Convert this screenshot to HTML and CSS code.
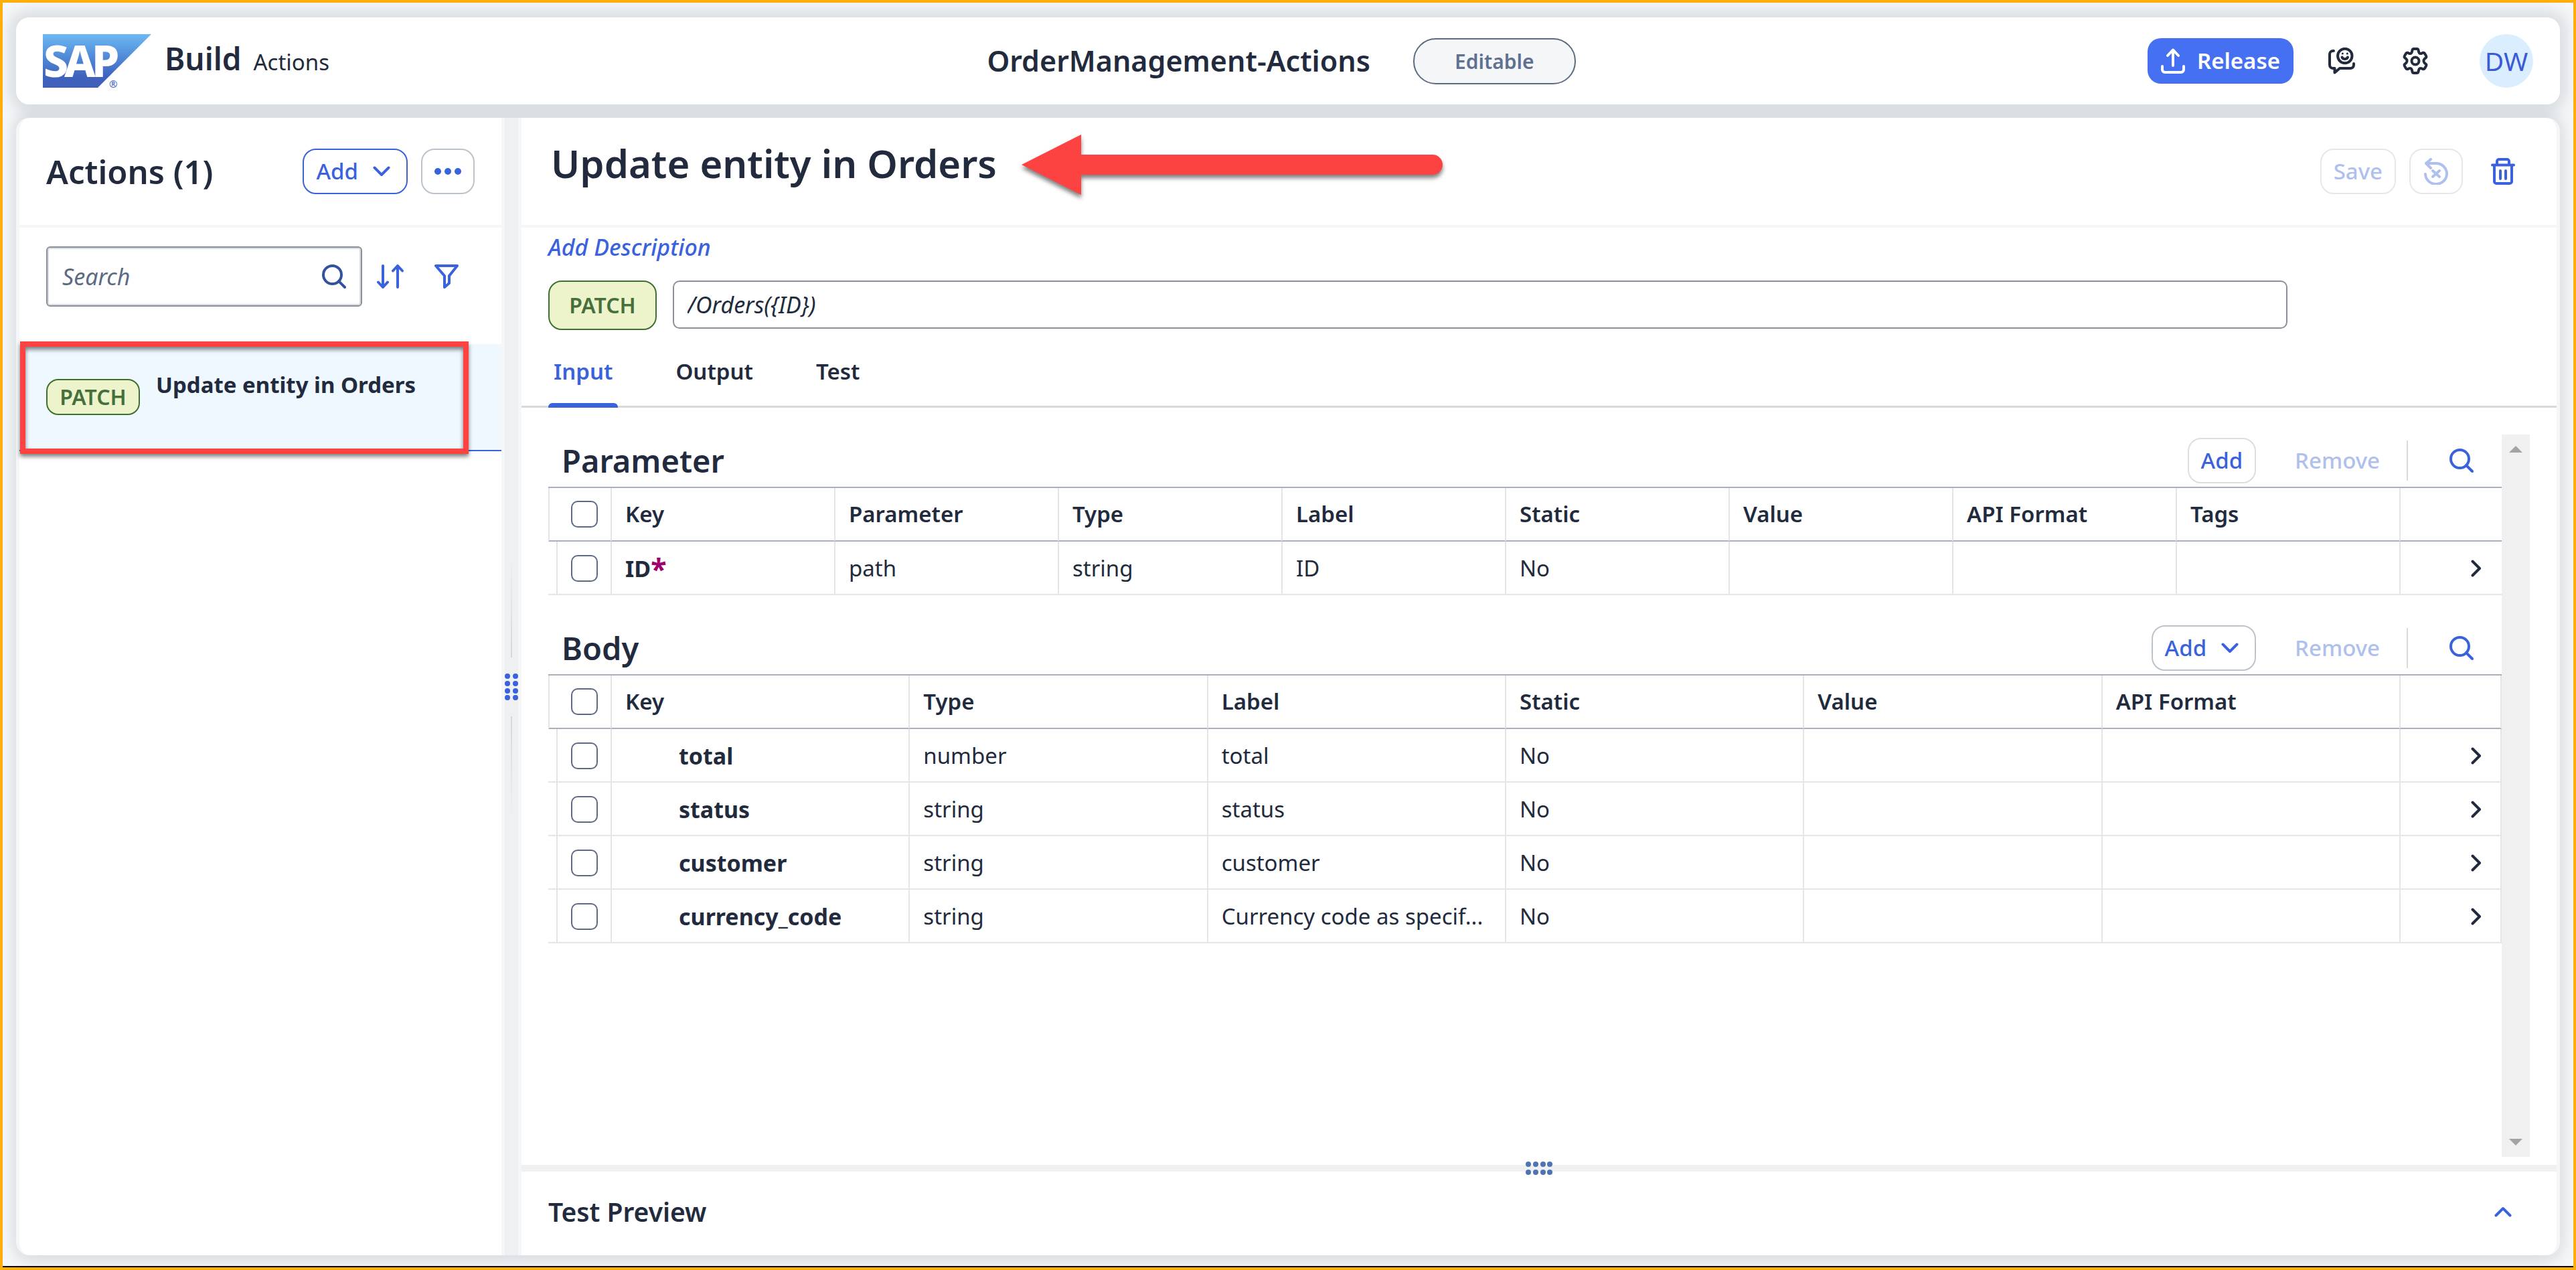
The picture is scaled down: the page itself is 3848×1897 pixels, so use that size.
FILE: index.html
```html
<!DOCTYPE html>
<html lang="en">
<head>
<meta charset="utf-8">
<meta name="viewport" content="width=device-width, initial-scale=1">
<title>SAP Build Actions</title>
<link rel="stylesheet" href="styles.css">
</head>
<body>
<svg class="sprite" width="0" height="0" aria-hidden="true">
  <symbol id="search" viewBox="0 0 36 36"><circle cx="15.5" cy="15.5" r="13.5"/><path d="M25 25l9 9"/></symbol>
  <symbol id="down" viewBox="0 0 26 16"><path d="M2.500 2.500L13 13L23.500 2.500"/></symbol>
  <symbol id="up" viewBox="0 0 26 16"><path d="M2.500 13.500L13 3L23.500 13.500"/></symbol>
  <symbol id="right" viewBox="0 0 16 26"><path d="M2.500 2.500L13 13L2.500 23.500"/></symbol>
</svg>
<div class="shell">
  <header class="card topbar">
    <div class="brand">
      <svg class="logo" width="162" height="80" viewBox="0 0 162 80" role="img" aria-label="SAP">
        <defs><linearGradient id="sap" x1="0" y1="0" x2="0" y2="1"><stop offset="0" stop-color="#6cb9f2"/><stop offset=".5" stop-color="#4c82d3"/><stop offset=".8" stop-color="#3f62bd"/><stop offset="1" stop-color="#3f5fbb"/></linearGradient></defs>
        <path d="M0 0H162L82 80H0z" fill="url(#sap)"/>
        <text class="logo-text" y="64" x="1 32 73">SAP</text>
        <text class="logo-mark" x="99" y="80">®</text>
      </svg>
      <div class="names"><span class="product">Build</span><span class="area">Actions</span></div>
    </div>
    <div class="project"><h1>OrderManagement-Actions</h1><span class="pill">Editable</span></div>
    <div class="tools">
      <button class="release" type="button"><svg width="36" height="38" viewBox="0 0 36 38"><path d="M18 26V3M10 11l8-8.500l8 8.500M2 27v5a4 4 0 0 0 4 4h24a4 4 0 0 0 4-4v-5"/></svg>Release</button>
      <button class="icon-btn dark" type="button" aria-label="Feedback"><svg width="40" height="40" viewBox="0 0 40 40"><circle cx="24.800" cy="12.500" r="10.700"/><path d="M8 5H7a5 5 0 0 0-5 5V26a5 5 0 0 0 5 5h2.500V37.500L17 31H33a5 5 0 0 0 5-5v-2"/><path d="M20.500 14.500c1.500 3.500 7 3.500 8.500 0"/><circle class="dot" cx="21.300" cy="9" r="1.500"/><circle class="dot" cx="28.300" cy="9" r="1.500"/></svg></button>
      <button class="icon-btn dark settings" type="button" aria-label="Settings"><svg width="40" height="40" viewBox="0 0 40 40"><circle cx="20" cy="20" r="5.500"/><path d="M17.500 2h5q1.500 0 1.900 1.500l.8 3.200q.5 1.900 2.200 2.300q1 .3 2-.2l1.800-.9q1.700-.7 2.700.9l2.200 3.800q.8 1.500-.4 2.600l-2 1.700q-1.200 1.200-1.200 3.100t1.200 3.100l2 1.700q1.200 1.100.4 2.600l-2.200 3.800q-1 1.600-2.700.9l-1.800-.9q-1-.5-2-.2q-1.700.4-2.200 2.300l-.8 3.200q-.4 1.500-1.900 1.500h-5q-1.500 0-1.900-1.500l-.8-3.200q-.5-1.900-2.200-2.300q-1-.3-2 .2l-1.800.9q-1.700.7-2.700-.9l-2.200-3.800q-.8-1.500.4-2.600l2-1.700q1.200-1.200 1.200-3.100t-1.200-3.100l-2-1.700q-1.200-1.100-.4-2.600l2.200-3.800q1-1.600 2.700-.9l1.800.9q1 .5 2 .2q1.700-.4 2.200-2.300l.8-3.200q.4-1.500 1.900-1.500z"/></svg></button>
      <button class="avatar" type="button" aria-label="Profile DW">DW</button>
    </div>
  </header>

  <main class="card workspace">
    <aside class="sidebar">
      <div class="pane-head">
        <h2>Actions (1)</h2>
        <div class="actions">
          <button class="btn strong" type="button">Add<svg class="chevron" width="26" height="16"><use href="#down"/></svg></button>
          <button class="btn square" type="button" aria-label="More"><svg class="fill" width="40" height="10" viewBox="0 0 40 10"><circle cx="5" cy="5" r="5"/><circle cx="20" cy="5" r="5"/><circle cx="35" cy="5" r="5"/></svg></button>
        </div>
      </div>
      <div class="filter-row">
        <label class="search"><input type="search" placeholder="Search" aria-label="Search"><svg width="36" height="36"><use href="#search"/></svg></label>
        <button class="icon-btn" type="button" aria-label="Sort"><svg width="40" height="36" viewBox="0 0 40 36"><path d="M9 2V33M2 26.500L9 34l7-7.500M31 34V3M24 9.500L31 2l7 7.500"/></svg></button>
        <button class="icon-btn" type="button" aria-label="Filter"><svg width="36" height="36" viewBox="0 0 36 36"><path d="M2 2H34L22 17V28L15 34V17z"/></svg></button>
      </div>
      <ul class="list">
        <li class="item"><span class="tag">PATCH</span><a href="#orders">Update entity in Orders</a><span class="marker"></span></li>
      </ul>
    </aside>

    <div class="splitter">
      <i class="rule top"></i>
      <svg width="20" height="40" viewBox="0 0 20 40"><g fill="#3a62dc"><circle cx="4" cy="4" r="4"/><circle cx="16" cy="4" r="4"/><circle cx="4" cy="15" r="4"/><circle cx="16" cy="15" r="4"/><circle cx="4" cy="26" r="4"/><circle cx="16" cy="26" r="4"/><circle cx="4" cy="36" r="4"/><circle cx="16" cy="36" r="4"/></g></svg>
      <i class="rule bottom"></i>
    </div>

    <section class="detail" id="orders">
      <div class="pane-head detail-head">
        <h2 class="title">Update entity in Orders</h2>
        <svg class="arrow" width="632" height="100" viewBox="0 0 632 100" aria-hidden="true"><path d="M0 45L89 0V30H614a15 15 0 0 1 0 30H89V90z"/></svg>
        <div class="actions">
          <button class="btn" type="button" disabled>Save</button>
          <button class="btn square" type="button" aria-label="Revert" disabled><svg width="36" height="40" viewBox="0 0 36 40"><path d="M2 24a16 15.500 0 1 0 16-16H3M10 2L3 8l7 7M13 19l10 9M23 19l-10 9"/></svg></button>
          <button class="icon-btn delete" type="button" aria-label="Delete"><svg width="36" height="40" viewBox="0 0 36 40"><path d="M2 10.500H34M9 10V5a3 3 0 0 1 3-3H24a3 3 0 0 1 3 3V10M5 11V35a3 3 0 0 0 3 3H28a3 3 0 0 0 3-3V11M14 19V31M22 19V31"/></svg></button>
        </div>
      </div>
      <div class="meta">
        <button class="describe" type="button">Add Description</button>
        <div class="endpoint"><span class="tag large">PATCH</span><input type="text" value="/Orders({ID})" aria-label="Endpoint" readonly></div>
      </div>
      <nav class="tabs">
        <a class="active" href="#input">Input</a><a href="#output">Output</a><a href="#test">Test</a>
      </nav>
      <div class="scroller" id="input">
        <div class="tables">
          <div class="toolbar">
            <h3>Parameter</h3>
            <button class="btn pale" type="button">Add</button>
            <button class="btn plain" type="button" disabled>Remove</button>
            <i class="bar"></i>
            <button class="icon-btn" type="button" aria-label="Search parameters"><svg width="36" height="36"><use href="#search"/></svg></button>
          </div>
          <table>
            <colgroup><col class="pick"><col span="8"><col class="go"></colgroup>
            <thead><tr><th><input type="checkbox" aria-label="Select all parameters"></th><th>Key</th><th>Parameter</th><th>Type</th><th>Label</th><th>Static</th><th>Value</th><th>API Format</th><th>Tags</th><th></th></tr></thead>
            <tbody><tr><td><input type="checkbox" aria-label="Select ID"></td><td class="key">ID<span class="req">*</span></td><td>path</td><td>string</td><td>ID</td><td>No</td><td></td><td></td><td></td><td><svg width="16" height="26"><use href="#right"/></svg></td></tr></tbody>
          </table>
          <div class="toolbar second">
            <h3>Body</h3>
            <button class="btn" type="button">Add<svg class="chevron" width="26" height="16"><use href="#down"/></svg></button>
            <button class="btn plain" type="button" disabled>Remove</button>
            <i class="bar"></i>
            <button class="icon-btn" type="button" aria-label="Search body"><svg width="36" height="36"><use href="#search"/></svg></button>
          </div>
          <table class="body-table">
            <colgroup><col class="pick"><col span="6"><col class="go"></colgroup>
            <thead><tr><th><input type="checkbox" aria-label="Select all body fields"></th><th>Key</th><th>Type</th><th>Label</th><th>Static</th><th>Value</th><th>API Format</th><th></th></tr></thead>
            <tbody>
              <tr><td><input type="checkbox" aria-label="Select total"></td><td class="key">total</td><td>number</td><td>total</td><td>No</td><td></td><td></td><td><svg width="16" height="26"><use href="#right"/></svg></td></tr>
              <tr><td><input type="checkbox" aria-label="Select status"></td><td class="key">status</td><td>string</td><td>status</td><td>No</td><td></td><td></td><td><svg width="16" height="26"><use href="#right"/></svg></td></tr>
              <tr><td><input type="checkbox" aria-label="Select customer"></td><td class="key">customer</td><td>string</td><td>customer</td><td>No</td><td></td><td></td><td><svg width="16" height="26"><use href="#right"/></svg></td></tr>
              <tr><td><input type="checkbox" aria-label="Select currency_code"></td><td class="key">currency_code</td><td>string</td><td>Currency code as specif...</td><td>No</td><td></td><td></td><td><svg width="16" height="26"><use href="#right"/></svg></td></tr>
            </tbody>
          </table>
        </div>
        <div class="scrollbar" aria-hidden="true">
          <svg width="20" height="10" viewBox="0 0 20 10"><path d="M0 10L10 0L20 10z"/></svg>
          <svg width="20" height="10" viewBox="0 0 20 10"><path d="M0 0L10 10L20 0z"/></svg>
        </div>
      </div>
      <div class="h-splitter"><svg width="40" height="20" viewBox="0 0 40 20"><g fill="#4f74b4"><circle cx="4" cy="4" r="4"/><circle cx="15" cy="4" r="4"/><circle cx="26" cy="4" r="4"/><circle cx="36" cy="4" r="4"/><circle cx="4" cy="16" r="4"/><circle cx="15" cy="16" r="4"/><circle cx="26" cy="16" r="4"/><circle cx="36" cy="16" r="4"/></g></svg></div>
      <div class="preview"><h3>Test Preview</h3><button class="icon-btn" type="button" aria-label="Expand test preview"><svg width="26" height="16"><use href="#up"/></svg></button></div>
    </section>
  </main>
</div>
</body>
</html>
```
FILE: styles.css
```css
* { box-sizing: border-box; }

:root {
  --ink: #222b3d;
  --blue: #3a62dc;
  --blue-off: #afc0ee;
  --line: #e5e5e5;
  --rule: #a8b0bf;
  --soft: #f5f6f8;
}

body {
  margin: 0;
  min-height: 100vh;
  display: flex;
  border: 4px solid #fdae0b;
  background: var(--soft);
  color: var(--ink);
  font: 400 33px/46px "Noto Sans", "Open Sans", sans-serif;
}

h1, h2, h3 { margin: 0; font-weight: 600; white-space: nowrap; }
button, input { font: inherit; color: inherit; }
button { padding: 0; border: 0; background: none; white-space: nowrap; }
a { color: inherit; text-decoration: none; }
svg { display: block; flex: none; fill: none; stroke: currentColor; stroke-width: 4; stroke-linecap: round; stroke-linejoin: round; }
svg g, .fill, .dot { stroke: none; }
.fill, .dot { fill: currentColor; }
.sprite { position: absolute; }

.shell {
  flex: 1;
  min-width: 0;
  display: flex;
  flex-direction: column;
  gap: 20px;
  padding: 22px 20px 16px;
  border-bottom: 2px solid #000;
  isolation: isolate;
  overflow: hidden;
}

/* Cards share one shadow layer that stays behind both of them. */
.card { position: relative; border-radius: 20px; background: #fff; }
.card::before {
  content: "";
  position: absolute;
  inset: 0;
  z-index: -1;
  border-radius: 20px;
  box-shadow: 0 0 20px 10px rgba(85, 107, 120, .17);
}

/* Top bar */
.topbar { display: grid; grid-template-columns: 1fr auto 1fr; align-items: center; height: 130px; padding: 0 40px; }
.brand { display: flex; align-items: center; gap: 20px; }
.names { display: flex; align-items: baseline; gap: 18px; margin-bottom: 2px; line-height: 62px; }
.logo { stroke: none; overflow: visible; }
.logo-text { fill: #fff; font: 800 66px "Noto Sans", sans-serif; }
.logo-mark { fill: #3f62bd; font: 400 15px "Noto Sans", sans-serif; }
.product { font-size: 46px; font-weight: 600; }
.project { display: flex; align-items: center; gap: 64px; margin-right: 20px; }
.project h1 { font-size: 43px; line-height: 60px; }
.pill { padding: 0 60px; border: 2px solid #5b6b83; border-radius: 34px; background: var(--soft); color: #5f7090; font-size: 30px; font-weight: 600; line-height: 65px; }
.tools { display: flex; align-items: center; justify-content: flex-end; }
.release { display: flex; align-items: center; gap: 18px; height: 68px; margin-right: 32px; padding: 0 20px; border-radius: 20px; background: #4670f2; color: #fff; font-weight: 600; }
.settings { margin: 0 56px 0 30px; }
.avatar { width: 80px; height: 80px; border-radius: 50%; background: #dbeeff; color: #3b5bd6; font-size: 39px; }

/* Buttons */
.btn { display: flex; align-items: center; justify-content: center; height: 68px; padding: 0 18px; border: 2px solid #bcc3ca; border-radius: 20px; color: var(--blue); font-weight: 500; }
.btn.strong { border-color: var(--blue); }
.btn.square { width: 80px; padding: 0; }
.btn.pale { border-color: #dadde2; }
.btn:disabled { border-color: #e5e7eb; color: var(--blue-off); }
.btn.plain { border-color: transparent; }
.chevron { margin: 0 6px 0 22px; }
.icon-btn { display: flex; flex: none; align-items: center; justify-content: center; width: 80px; height: 68px; color: var(--blue); }
.icon-btn.dark { color: var(--ink); }
.actions { display: flex; gap: 20px; }

/* Two panes */
.workspace { flex: 1; display: flex; border: solid var(--soft); border-width: 0 5px; overflow: clip; overflow-clip-margin: 40px; }
.pane-head { display: flex; align-items: center; justify-content: space-between; height: 164px; padding: 0 40px; border-bottom: 4px solid var(--soft); }
.sidebar { flex: none; width: 720px; }
.sidebar h2 { font-size: 49px; line-height: 66px; }
.filter-row { display: flex; align-items: center; height: 174px; padding: 0 40px 28px; }
.filter-row .icon-btn { width: 84px; }
.search { flex: 1; min-width: 0; display: flex; align-items: center; height: 90px; padding: 0 22px; border: 2px solid #8a909a; border-radius: 6px; box-shadow: inset 0 0 0 2px #d9dbe0; color: #31529c; }
.search input { flex: 1; width: 0; min-width: 0; padding: 0; border: 0; outline: 0; background: none; font-size: 34px; font-style: italic; }
.search input::placeholder { color: #5b6b83; opacity: 1; }
.list { margin: 0; padding: 0; list-style: none; }
.item { position: relative; display: flex; gap: 24px; height: 160px; padding: 38px 40px; border-bottom: 2px solid var(--blue); background: #eff7ff; font-weight: 700; white-space: nowrap; }
.tag { flex: none; width: 140px; height: 54px; margin-top: 14px; border: 2px solid #40702f; border-radius: 18px; background: #edf4cb; color: #466f3b; font-size: 32px; font-weight: 600; line-height: 50px; text-align: center; }
.tag.large { width: 162px; height: 74px; margin: 0; border-radius: 20px; line-height: 70px; }
.marker { position: absolute; inset: -4px 49px -6px 1px; border: 8px solid #fd4242; box-shadow: 0 4px 6px rgba(0, 0, 0, .5), inset 0 4px 6px rgba(0, 0, 0, .5); }

.splitter { flex: none; display: flex; flex-direction: column; align-items: center; justify-content: center; gap: 24px; width: 30px; border: solid var(--soft); border-width: 0 5px; background: #eff0f2; }
.rule { width: 2px; height: 152px; }
.rule.top { background: linear-gradient(transparent, #d5d8db); }
.rule.bottom { background: linear-gradient(#d5d8db, transparent); }

/* Detail pane */
.detail { flex: 1; min-width: 0; display: flex; flex-direction: column; }
.detail-head { position: relative; padding-left: 44px; }
.title { margin-bottom: 24px; font-size: 58px; line-height: 80px; }
.arrow { position: absolute; left: 747px; top: 25px; fill: #fd4242; stroke: none; filter: drop-shadow(0 5px 3px rgba(0, 0, 0, .5)); }
.meta { padding: 6px 40px 0; }
.describe { display: block; color: var(--blue); font-size: 34px; font-style: italic; font-weight: 500; }
.endpoint { display: flex; gap: 24px; margin-top: 27px; padding-right: 362px; }
.endpoint input { flex: 1; min-width: 0; height: 72px; padding: 0 20px; border: 2px solid #8a909a; border-radius: 10px; outline: 0; font-size: 34px; font-style: italic; }
.tabs { display: flex; gap: 78px; height: 116px; padding: 0 40px; border-bottom: 3px solid #d9d9d9; font-weight: 600; }
.tabs a { position: relative; padding: 39px 8px 0; }
.tabs .active { color: var(--blue); }
.tabs .active::after { content: ""; position: absolute; inset: auto 0 -3px; height: 7px; border-radius: 6px 6px 0 0; background: var(--blue); }
.scroller { flex: 1; display: flex; padding: 40px 40px 12px; }
.tables { flex: 1; min-width: 0; }
.scrollbar { flex: none; display: flex; flex-direction: column; align-items: center; justify-content: space-between; width: 42px; padding: 17px 0; background: #f0f0f0; }
.scrollbar svg { fill: #a3a3a3; stroke: none; }

.toolbar { display: flex; align-items: center; height: 78px; padding: 0 20px; }
.toolbar.second { margin-top: 40px; }
.toolbar h3 { flex: 1; font-size: 47px; line-height: 64px; }
.toolbar .plain { margin: 0 20px 0 38px; }
.bar { width: 2px; height: 60px; margin-right: 40px; background: #d9d9d9; }

table { width: 100%; table-layout: fixed; border-collapse: separate; border-spacing: 0; border-top: 2px solid var(--rule); }
.pick { width: 93px; }
.go { width: 153px; }
th, td { height: 80px; padding: 0 0 0 20px; border-left: 2px solid var(--line); border-bottom: 2px solid var(--line); text-align: left; white-space: nowrap; }
td { padding-top: 2px; }
th { border-bottom-color: var(--rule); font-weight: 600; }
th:first-child { padding-left: 32px; }
td:first-child { padding-left: 34px; border-left: 0; background: linear-gradient(var(--line), var(--line)) 12px 0 / 2px 100% no-repeat; }
td:last-child { padding-left: 105px; }
.body-table tr > :last-child { border-right: 2px solid var(--line); }
.key { font-size: 34px; font-weight: 700; }
.body-table .key { padding-left: 100px; }
.req { color: #a0006d; font-size: 43px; line-height: 34px; vertical-align: -4px; }
input[type="checkbox"] { appearance: none; display: block; width: 40px; height: 40px; margin: 0; border: 2px solid #5b6b83; border-radius: 10px; background: #fff; }

.h-splitter { display: flex; align-items: center; justify-content: center; height: 10px; background: #eff0f2; }
.preview { display: flex; align-items: center; justify-content: space-between; height: 125px; padding: 0 40px 5px; }
.preview h3 { font-size: 39px; line-height: 54px; }
```
